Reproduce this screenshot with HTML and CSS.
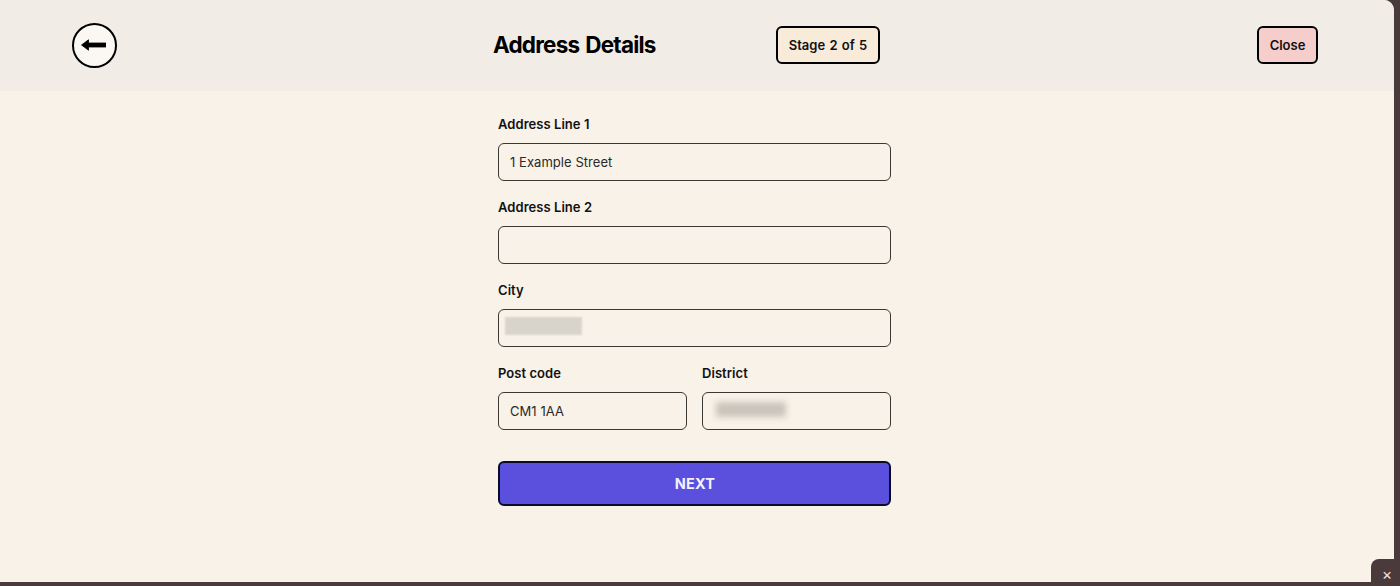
FILE: index.html
```html
<!DOCTYPE html>
<html lang="en">
<head>
<meta charset="utf-8">
<title>Address Details</title>
<link rel="stylesheet" href="styles.css">
</head>
<body>
<div class="modal">
  <header class="header">
    <button class="back" type="button" aria-label="Back">
      <svg class="arrow" width="25" height="12" viewBox="0 0 25 12"><path d="M0.5 6 L7.5 0.8 V4 H25 V8 H7.5 V11.2 Z" fill="#000" stroke="#000" stroke-width="0.8" stroke-linejoin="round"/></svg>
    </button>
    <h1 class="title">Address Details</h1>
    <span class="stage">Stage 2 of 5</span>
    <button class="close" type="button">Close</button>
  </header>
  <form class="form">
    <div class="field">
      <label class="label">Address Line 1</label>
      <div class="input">1 Example Street</div>
    </div>
    <div class="field">
      <label class="label">Address Line 2</label>
      <div class="input"></div>
    </div>
    <div class="field">
      <label class="label">City</label>
      <div class="input"><span class="blur-city"></span></div>
    </div>
    <div class="row">
      <div class="field">
        <label class="label">Post code</label>
        <div class="input">CM1 1AA</div>
      </div>
      <div class="field">
        <label class="label">District</label>
        <div class="input"><span class="blur-district"></span></div>
      </div>
    </div>
    <button class="next" type="button">NEXT</button>
  </form>
</div>
<div class="dismiss">×</div>
</body>
</html>
```

FILE: styles.css
```css
* { box-sizing: border-box; }
html, body { margin: 0; height: 100%; }
body {
  background: #4b3a3c;
  font-family: Inter, "Liberation Sans", sans-serif;
  color: #111;
  overflow: hidden;
  position: relative;
}
.modal {
  width: 1394px;
  height: 582px;
  background: #f9f2e9;
  border-radius: 0 10px 0 0;
  overflow: hidden;
}
.header {
  height: 91px;
  background: #f1ede6;
  display: flex;
  align-items: center;
  padding: 0 0 1px 72px;
}
.back {
  width: 45px;
  height: 45px;
  border: 2px solid #000;
  border-radius: 50%;
  background: #fbf8f3;
  padding: 0;
  display: flex;
  align-items: center;
  justify-content: center;
}
.arrow { margin-left: -3px; }
.title {
  margin: 0 0 0 376px;
  width: 283px;
  font-size: 22.5px;
  line-height: 30px;
  font-weight: 700;
  color: #000;
  letter-spacing: -0.8px;
  word-spacing: 1.5px;
}
.stage, .close {
  height: 38px;
  border: 2px solid #000;
  border-radius: 6px;
  font-family: inherit;
  font-size: 13px;
  font-weight: 600;
  color: #111;
  display: flex;
  align-items: center;
  justify-content: center;
  padding: 0;
}
.stage {
  width: 104px;
  background: #f8ebd9;
  word-spacing: 1px;
}
.close {
  width: 61px;
  margin-left: 377px;
  background: #f5cdcb;
}
.form {
  width: 393px;
  margin-left: 498px;
  padding-top: 23px;
  display: flex;
  flex-direction: column;
  gap: 16px;
}
.field {
  display: flex;
  flex-direction: column;
  gap: 10px;
  min-width: 0;
}
.label {
  font-size: 13px;
  line-height: 20px;
  height: 19px;
  font-weight: 600;
  color: #111;
  letter-spacing: 0.05px;
}
.input {
  height: 38px;
  border: 1.5px solid #3a3833;
  border-radius: 6px;
  padding: 0 11px;
  font-size: 13px;
  line-height: 36px;
  letter-spacing: 0.05px;
  color: #2a2a28;
  position: relative;
}
.blur-city {
  position: absolute;
  left: 6px;
  top: 7px;
  width: 77px;
  height: 18px;
  background: #d8d4cb;
  filter: blur(1px);
}
.blur-district {
  position: absolute;
  left: 13px;
  top: 9px;
  width: 70px;
  height: 15px;
  background: #c9c5bb;
  filter: blur(3px);
}
.row {
  display: grid;
  grid-template-columns: 189px 189px;
  gap: 15px;
}
.next {
  height: 45px;
  margin-top: 15px;
  background: #5a50dd;
  border: 2px solid #0a0a2a;
  border-radius: 6px;
  color: #f3f1ff;
  font-family: inherit;
  font-size: 14.5px;
  font-weight: 700;
  letter-spacing: 0.2px;
  padding: 0 0 0 1px;
}
.dismiss {
  position: absolute;
  left: 1371px;
  top: 559px;
  width: 29px;
  height: 27px;
  background: #4b3a3c;
  border-top-left-radius: 8px;
  color: #ecdfe0;
  font-size: 16px;
  line-height: 30px;
  text-align: center;
  padding-left: 3px;
}
```
